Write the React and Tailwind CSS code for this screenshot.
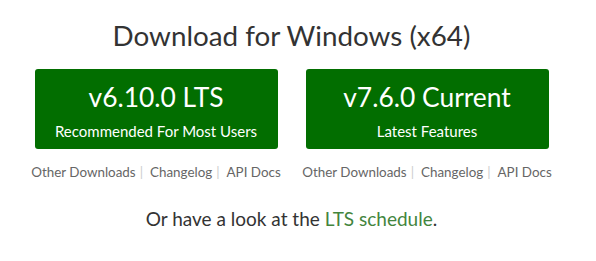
export default function App() {
  const font = { fontFamily: '"Source Sans Pro", Lato, "Open Sans", sans-serif' };
  const Links = () => (
    <div className="mt-[14px] flex items-center justify-center whitespace-nowrap text-[13.4px] leading-[18px] text-[#666]">
      <span>Other Downloads</span>
      <span className="ml-[4px] mr-[7px] text-[#ccc]">|</span>
      <span>Changelog</span>
      <span className="ml-[4px] mr-[7px] text-[#ccc]">|</span>
      <span>API Docs</span>
    </div>
  );
  const Btn = ({ title, sub }) => (
    <div className="flex w-[243px] flex-col">
      <div className="flex h-[80px] w-[243px] flex-col items-center rounded-[3px] bg-[#026e00] pt-[13px] text-white">
        <div className="text-[26.4px] leading-[30px]">{title}</div>
        <div className="mt-[10px] text-[15px] leading-[18px]">{sub}</div>
      </div>
      <Links />
    </div>
  );
  return (
    <div className="h-[261px] w-[596px] bg-white" style={font}>
      <div className="flex w-[583px] flex-col items-center pt-[19px]">
        <h1 className="text-[27.8px] leading-[34px] text-[#333]">Download for Windows (x64)</h1>
        <div className="mt-[16px] flex gap-[28px]">
          <Btn title="v6.10.0 LTS" sub="Recommended For Most Users" />
          <Btn title="v7.6.0 Current" sub="Latest Features" />
        </div>
        <p className="mt-[26px] text-[19px] leading-[24px] text-[#333]">
          Or have a look at the <span className="text-[#43853d]">LTS schedule</span>.
        </p>
      </div>
    </div>
  );
}
